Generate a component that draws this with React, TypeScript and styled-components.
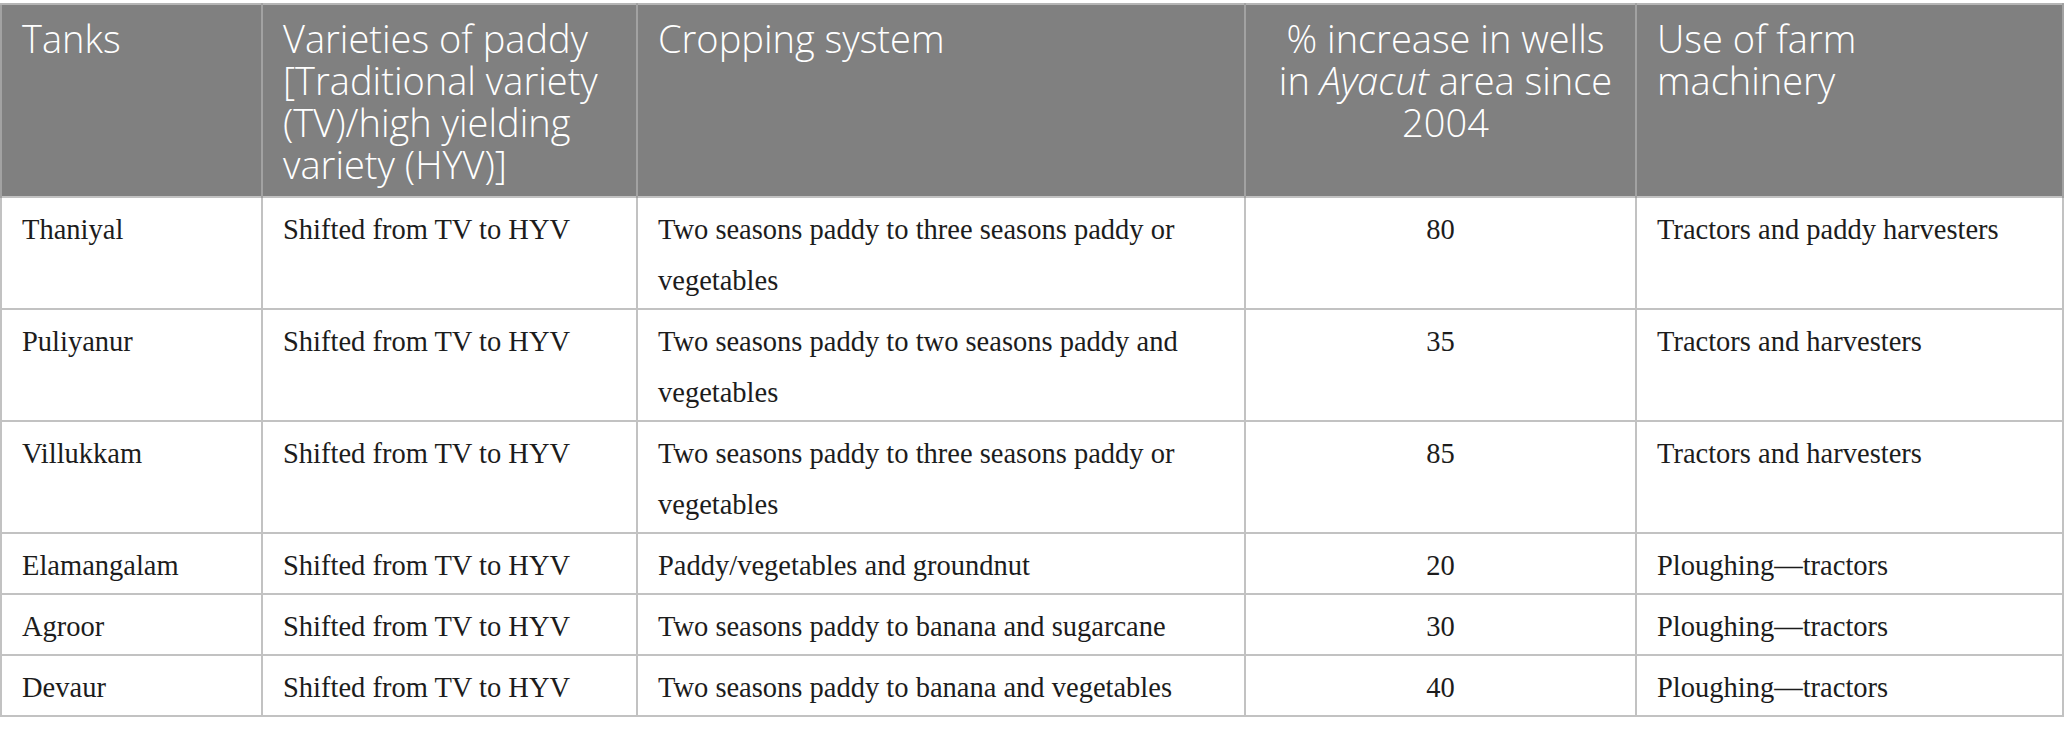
import styled, { createGlobalStyle } from "styled-components";

const GlobalStyle = createGlobalStyle`
  html, body {
    margin: 0;
    padding: 0;
    background: #ffffff;
  }
`;

const Wrap = styled.div`
  padding-top: 3px;
`;

const Table = styled.table`
  width: 2062px;
  border-collapse: collapse;
  table-layout: fixed;
  border: 2px solid #bdbdbd;
`;

const HeadCell = styled.th<{ $center?: boolean }>`
  background: #808080;
  color: #ffffff;
  font-family: "Open Sans", "Noto Sans", sans-serif;
  font-weight: 300;
  font-size: 38px;
  line-height: 42px;
  text-align: ${(p) => (p.$center ? "center" : "left")};
  vertical-align: top;
  padding: 12px 10px 11px 20px;
  border-left: 2px solid #a2a2a2;
  border-right: 2px solid #a2a2a2;
  border-top: 2px solid #b5b5b5;
  white-space: nowrap;

  em {
    font-style: italic;
  }
`;

const Cell = styled.td<{ $center?: boolean }>`
  font-family: "Liberation Serif", "Times New Roman", serif;
  font-size: 28.5px;
  line-height: 51px;
  color: #1c1c1c;
  text-align: ${(p) => (p.$center ? "center" : "left")};
  vertical-align: top;
  padding: 6px 20px 2px 20px;
  border: 2px solid #c2c2c2;
`;

type Row = {
  tank: string;
  variety: string;
  cropping: string;
  wells: string;
  machinery: string;
};

const rows: Row[] = [
  {
    tank: "Thaniyal",
    variety: "Shifted from TV to HYV",
    cropping: "Two seasons paddy to three seasons paddy or vegetables",
    wells: "80",
    machinery: "Tractors and paddy harvesters",
  },
  {
    tank: "Puliyanur",
    variety: "Shifted from TV to HYV",
    cropping: "Two seasons paddy to two seasons paddy and vegetables",
    wells: "35",
    machinery: "Tractors and harvesters",
  },
  {
    tank: "Villukkam",
    variety: "Shifted from TV to HYV",
    cropping: "Two seasons paddy to three seasons paddy or vegetables",
    wells: "85",
    machinery: "Tractors and harvesters",
  },
  {
    tank: "Elamangalam",
    variety: "Shifted from TV to HYV",
    cropping: "Paddy/vegetables and groundnut",
    wells: "20",
    machinery: "Ploughing\u2014tractors",
  },
  {
    tank: "Agroor",
    variety: "Shifted from TV to HYV",
    cropping: "Two seasons paddy to banana and sugarcane",
    wells: "30",
    machinery: "Ploughing\u2014tractors",
  },
  {
    tank: "Devaur",
    variety: "Shifted from TV to HYV",
    cropping: "Two seasons paddy to banana and vegetables",
    wells: "40",
    machinery: "Ploughing\u2014tractors",
  },
];

export default function App() {
  return (
    <>
      <GlobalStyle />
      <Wrap>
        <Table>
          <colgroup>
            <col style={{ width: 261 }} />
            <col style={{ width: 375 }} />
            <col style={{ width: 608 }} />
            <col style={{ width: 391 }} />
            <col style={{ width: 427 }} />
          </colgroup>
          <thead>
            <tr>
              <HeadCell>Tanks</HeadCell>
              <HeadCell>
                Varieties of paddy
                <br />
                [Traditional variety
                <br />
                (TV)/high yielding
                <br />
                variety (HYV)]
              </HeadCell>
              <HeadCell>Cropping system</HeadCell>
              <HeadCell $center>
                % increase in wells
                <br />
                in <em>Ayacut</em> area since
                <br />
                2004
              </HeadCell>
              <HeadCell>
                Use of farm
                <br />
                machinery
              </HeadCell>
            </tr>
          </thead>
          <tbody>
            {rows.map((r) => (
              <tr key={r.tank}>
                <Cell>{r.tank}</Cell>
                <Cell>{r.variety}</Cell>
                <Cell>{r.cropping}</Cell>
                <Cell $center>{r.wells}</Cell>
                <Cell>{r.machinery}</Cell>
              </tr>
            ))}
          </tbody>
        </Table>
      </Wrap>
    </>
  );
}
